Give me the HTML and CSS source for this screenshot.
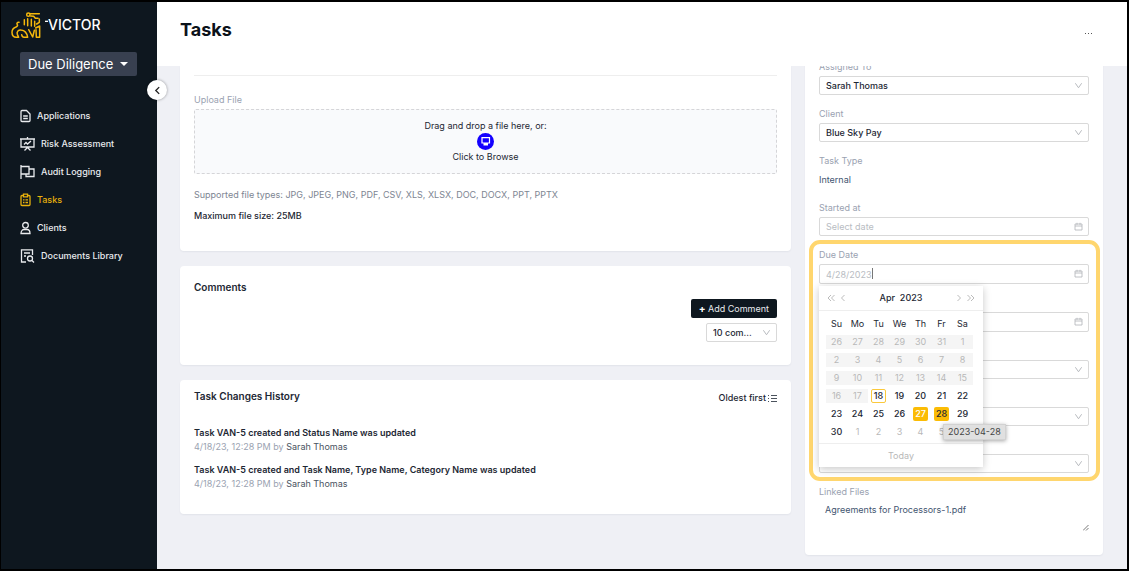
FILE: index.html
```
<!DOCTYPE html>
<html lang="en">
<head>
  <meta charset="UTF-8" />
  <meta name="viewport" content="width=device-width, initial-scale=1.0" />
  <title>Victor - Tasks</title>
  <link rel="stylesheet" href="styles.css">
</head>
<body>
<!-- shared icons -->
<svg class="sprite" aria-hidden="true">
  <symbol id="i-down" viewBox="0 0 8 8"><path d="M1.200 2 4 6l2.800-4" fill="none" stroke="currentColor" stroke-width=".8"/></symbol>
  <symbol id="i-cal" viewBox="0 0 9 9"><path d="M1 2h7v6H1zM1 4h7M3 .8v2M6 .8v2" fill="none" stroke="currentColor" stroke-width=".8"/></symbol>
</svg>

<div class="app">
  <!-- SIDEBAR -->
  <aside class="sidebar">
    <a class="brand" href="#">
      <svg class="lion" viewBox="33 28 111 84" aria-hidden="true">
        <g fill="none" stroke="#f5b80c" stroke-width="4.500" stroke-linejoin="round" stroke-linecap="round">
          <circle cx="85" cy="39" r="5"/>
          <path d="M91 36h27M92 43l9 1 5 6h8M73 54v15M83 51v21M94 53v20M104 59v15M118 52v10l-8 5"/>
          <path d="M57 62c-5-1-8 4-5 7 2 3 0 5-4 7-8 3-12 8-12 16 0 9 5 15 13 15h7M56 107l-4-9c-3-8 4-14 11-13 12 1 18 9 20 22H72c-4 0-6-3-7-8M86 84l12 22 5-20M108 84l1 23h10V73l-12 6"/>
        </g>
        <path d="M135 59h10" stroke="#fff" stroke-width="4"/>
      </svg>
      <span class="brand-name">VICTOR</span>
    </a>
    <button class="switcher">Due Diligence <span class="caret"></span></button>
    <button class="collapse" aria-label="Collapse menu">
      <svg viewBox="0 0 8 8"><path d="M5.500 1 2.500 4l3 3" fill="none" stroke="#222" stroke-width="1.200"/></svg>
    </button>
    <nav>
      <a href="#"><svg class="ico" viewBox="0 0 11 14"><path d="M2 1.500h4.500L10 5v6.500q0 1-1 1H2q-1 0-1-1v-9q0-1 1-1zM3.200 7h4.600M3.200 9.500h4.600"/></svg>Applications</a>
      <a href="#"><svg class="ico wide" viewBox="0 0 15 14"><path d="M0 2h15M1 2v8h13V2M7.500 0v2M4 7.500 6 5.500l1.500 1.500 3.500-3M4.500 13.500l3-3 3 3"/></svg>Risk Assessment</a>
      <a href="#"><svg class="ico wide" viewBox="0 0 15 14"><path d="M1 0v14M1 1.500h8v7.500H1M9 4h5v7.500H6V9"/></svg>Audit Logging</a>
      <a href="#" class="active"><svg class="ico" viewBox="0 0 11 14"><path d="M3.500 2.500H2q-1 0-1 1v8q0 1 1 1h7q1 0 1-1v-8q0-1-1-1H7.500M3.500 1.200h4v2.600h-4zM3 6.800h1.500M5.500 6.800H8M3 9.500h1.500M5.500 9.500H8"/></svg>Tasks</a>
      <a href="#"><svg class="ico" viewBox="0 0 11 14"><circle cx="5.500" cy="4.300" r="2.800"/><path d="M1 12.500c0-2.500 1.500-4 3-4h3c1.500 0 3 1.500 3 4z"/></svg>Clients</a>
      <a href="#"><svg class="ico wide" viewBox="0 0 15 14"><path d="M6 13H1.500V.8h11V6M4 4h6M4 7h2M12 11.500l2 2"/><circle cx="10" cy="9.500" r="2.500"/></svg>Documents Library</a>
    </nav>
  </aside>

  <div class="main">
    <header class="topbar">
      <h1>Tasks</h1>
      <button class="more" aria-label="More actions"><i></i><i></i><i></i></button>
    </header>

    <div class="content">
      <div class="col">
        <!-- UPLOAD -->
        <section class="card upload">
          <hr>
          <h3 class="label">Upload File</h3>
          <div class="dropzone">
            <p>Drag and drop a file here, or:</p>
            <button class="browse">
              <svg viewBox="0 0 17 17"><circle cx="8.500" cy="8.500" r="8.500" fill="#1400ff"/><path d="M5 4.700h7.500v5.300H5z" fill="none" stroke="#fff" stroke-width="1.200"/><path d="M6.500 10h4.500v2.500H6.500z" fill="#fff"/></svg>
              Click to Browse
            </button>
          </div>
          <p class="types">Supported file types: JPG, JPEG, PNG, PDF, CSV, XLS, XLSX, DOC, DOCX, PPT, PPTX</p>
          <p class="max">Maximum file size: 25MB</p>
        </section>

        <!-- COMMENTS -->
        <section class="card comments">
          <h2>Comments</h2>
          <div class="comment-tools">
            <button class="add"><b>+</b> Add Comment</button>
            <div class="control count">
              <select aria-label="Comments per page"><option>10 com...</option></select>
              <svg><use href="#i-down"/></svg>
            </div>
          </div>
        </section>

        <!-- HISTORY -->
        <section class="card history">
          <div class="history-head">
            <h2>Task Changes History</h2>
            <button class="sort">Oldest first
              <svg viewBox="0 0 9 9"><path d="M3 1.500h6M3 4.500h6M3 7.500h6M0 1.500h1M0 4.500h1M0 7.500h1" stroke="currentColor" stroke-width=".8" fill="none"/></svg>
            </button>
          </div>
          <ul>
            <li>
              <strong>Task VAN-5 created and Status Name was updated</strong>
              <p>4/18/23, 12:28 PM by <span>Sarah Thomas</span></p>
            </li>
            <li>
              <strong>Task VAN-5 created and Task Name, Type Name, Category Name was updated</strong>
              <p>4/18/23, 12:28 PM by <span>Sarah Thomas</span></p>
            </li>
          </ul>
        </section>
      </div>

      <!-- DETAILS -->
      <section class="card details">
        <div class="field">
          <label for="assigned">Assigned To</label>
          <div class="control"><select id="assigned"><option>Sarah Thomas</option></select><svg><use href="#i-down"/></svg></div>
        </div>
        <div class="field">
          <label for="client">Client</label>
          <div class="control"><select id="client"><option>Blue Sky Pay</option></select><svg><use href="#i-down"/></svg></div>
        </div>
        <div class="field">
          <span class="label">Task Type</span>
          <p class="value">Internal</p>
        </div>
        <div class="field">
          <label for="started">Started at</label>
          <div class="control"><input id="started" type="text" placeholder="Select date"><svg><use href="#i-cal"/></svg></div>
        </div>

        <div class="highlight">
          <div class="field">
            <label for="due">Due Date</label>
            <div class="control date"><input id="due" type="text" value="4/28/2023"><span class="cursor"></span><svg><use href="#i-cal"/></svg></div>
          </div>
          <div class="field under">
            <div class="control date"><input type="text" aria-label="Completed at"><svg><use href="#i-cal"/></svg></div>
          </div>
          <div class="field under">
            <div class="control"><select aria-label="Priority"></select><svg><use href="#i-down"/></svg></div>
          </div>
          <div class="field under">
            <div class="control"><select aria-label="Status"></select><svg><use href="#i-down"/></svg></div>
          </div>
          <div class="field under">
            <div class="control"><select aria-label="Category"></select><svg><use href="#i-down"/></svg></div>
          </div>

          <div class="picker">
            <div class="picker-head">
              <button aria-label="Previous year"><svg viewBox="0 0 8 8"><path d="M4 1 1 4l3 3M7.500 1l-3 3 3 3"/></svg></button>
              <button aria-label="Previous month"><svg viewBox="0 0 8 8"><path d="M5.500 1l-3 3 3 3"/></svg></button>
              <span class="month">Apr&nbsp; 2023</span>
              <button aria-label="Next month"><svg viewBox="0 0 8 8"><path d="M2.500 1l3 3-3 3"/></svg></button>
              <button aria-label="Next year"><svg viewBox="0 0 8 8"><path d="M.5 1l3 3-3 3M4 1l3 3-3 3"/></svg></button>
            </div>
            <table>
              <thead><tr><th>Su</th><th>Mo</th><th>Tu</th><th>We</th><th>Th</th><th>Fr</th><th>Sa</th></tr></thead>
              <tbody>
                <tr><td><button disabled>26</button></td><td><button disabled>27</button></td><td><button disabled>28</button></td><td><button disabled>29</button></td><td><button disabled>30</button></td><td><button disabled>31</button></td><td><button disabled>1</button></td></tr>
                <tr><td><button disabled>2</button></td><td><button disabled>3</button></td><td><button disabled>4</button></td><td><button disabled>5</button></td><td><button disabled>6</button></td><td><button disabled>7</button></td><td><button disabled>8</button></td></tr>
                <tr><td><button disabled>9</button></td><td><button disabled>10</button></td><td><button disabled>11</button></td><td><button disabled>12</button></td><td><button disabled>13</button></td><td><button disabled>14</button></td><td><button disabled>15</button></td></tr>
                <tr><td><button disabled>16</button></td><td><button disabled>17</button></td><td><button class="today">18</button></td><td><button>19</button></td><td><button>20</button></td><td><button>21</button></td><td><button>22</button></td></tr>
                <tr><td><button>23</button></td><td><button>24</button></td><td><button>25</button></td><td><button>26</button></td><td><button class="picked">27</button></td><td><button class="hovered">28</button></td><td><button>29</button></td></tr>
                <tr><td><button>30</button></td><td><button class="next">1</button></td><td><button class="next">2</button></td><td><button class="next">3</button></td><td><button class="next">4</button></td><td><button class="next">5</button></td><td><button class="next">6</button></td></tr>
              </tbody>
            </table>
            <button class="picker-foot">Today</button>
            <div class="tip">2023-04-28</div>
          </div>
        </div>

        <div class="linked">
          <span class="label">Linked Files</span>
          <a href="#">Agreements for Processors-1.pdf</a>
          <svg class="grip" viewBox="0 0 6 6"><path d="M0 5.500 5.500 0M3 5.500l2.500-2.500" stroke="#555" fill="none" stroke-width=".8"/></svg>
        </div>
      </section>
    </div>
  </div>
</div>
</body>
</html>
```
FILE: styles.css
```
:root { --navy:#0e171f; --ink:#1d2733; --muted:#9aa2b1; --line:#d9d9d9; --amber:#fbbc05; --bg:#eff0f5; }
*{box-sizing:border-box;margin:0;padding:0}
body{font:9px/14px Inter,"Liberation Sans",sans-serif;color:var(--ink);background:var(--bg)}
button{font:inherit;color:inherit;background:none;border:none;cursor:pointer}
a{color:inherit;text-decoration:none}
ul{list-style:none}
.sprite{position:absolute;width:0;height:0}

.app{display:grid;grid-template-columns:156px minmax(0,1fr);min-height:100vh;border:solid #000;border-width:2px 2px 2px 1px}

/* sidebar */
.sidebar{position:relative;z-index:2;background:var(--navy);color:#e9ebee;padding:8px 0 0}
.brand{display:flex;align-items:center;padding-left:10px;height:30px}
.lion{width:37px;height:28px}
.brand-name{font-size:14px;font-weight:500;line-height:16px;color:#fff}
.switcher{display:flex;align-items:center;gap:7px;margin:12px 0 0 19px;height:24px;padding:0 9px 0 8px;border-radius:2px;background:#384050;color:#fff;font-size:13px}
.caret{border:4px solid transparent;border-top-color:#fff;border-bottom:0}
.collapse{position:absolute;right:-10px;top:78px;width:20px;height:20px;border-radius:50%;background:#fff;box-shadow:0 0 3px rgba(0,0,0,.4);display:grid;place-items:center}
.collapse svg{width:9px;height:9px}
nav{margin-top:26px;padding-left:19px}
nav a{display:flex;align-items:center;gap:6px;height:28px;font-weight:500}
nav .active{color:#e8b10c}
.ico{width:11px;height:14px;fill:none;stroke:currentColor;stroke-width:1.3}
.wide{width:15px}

/* top bar */
.main{display:flex;flex-direction:column;min-width:0}
.topbar{display:flex;justify-content:space-between;align-items:center;height:64px;padding:0 35px 8px 23px;background:#fff;position:relative;z-index:1}
h1{font-size:18px;line-height:24px;font-weight:700;color:#0b121a}
.more{display:flex;gap:2px;padding:6px 0 0}
.more i{width:1px;height:1px;background:#555}

/* cards */
.content{flex:1;display:grid;grid-template-columns:minmax(0,1fr) 298px;align-items:start;gap:14px;padding:0 24px 14px 23px;overflow:hidden}
.col{display:grid;gap:15px}
.card{background:#fff;border-radius:4px;padding:14px;box-shadow:0 1px 2px rgba(20,30,60,.06)}
h2{font-size:10px;line-height:14px;font-weight:600}
.label,label{display:block;font-size:9px;font-weight:400;line-height:14px;color:var(--muted)}

.upload{border-radius:0 0 4px 4px;padding-top:9px;height:185px}
.upload hr{border:0;border-top:1px solid #eee;margin-bottom:17px}
.dropzone{margin-top:2px;padding:9px;border:1px dashed #d5d5d8;border-radius:2px;background:#f9fafc;text-align:center}
.browse{display:block;margin:auto}
.browse svg{display:block;width:17px;height:17px;margin:auto}
.types{margin-top:14px;color:#7d8592}
.max{margin-top:7px;font-weight:500}

.comment-tools{display:flex;flex-direction:column;align-items:flex-end;gap:3px;margin-top:5px}
.comments{padding-bottom:23px}
.add{height:19px;padding:0 8px;border-radius:2px;background:var(--navy);color:#e9ebee}
.add b{font-size:10px;color:#fff}
.count{width:71px}

.history{padding:9px 14px 23px}
.history-head{display:flex;justify-content:space-between}
.sort{display:flex;align-items:center;gap:2px;font-weight:500;padding-top:2px}
.sort svg{width:9px;height:9px}
.history ul{display:grid;gap:9px;margin-top:21px}
.history strong{display:block;font-weight:600}
.history li p{color:var(--muted);line-height:14px}
.history li span{color:#4a5361}

/* details form */
.details{margin-top:-20px;padding-bottom:24px}
.field{margin-bottom:12px}
.control{position:relative;height:19px;margin-top:2px}
.control select,.control input{appearance:none;display:block;width:100%;height:100%;padding:0 20px 0 6px;border:1px solid var(--line);border-radius:2px;background:#fff;font:inherit;color:var(--ink);outline:0}
.control select{font-weight:500}
.control input,.control input::placeholder{color:#b8bcc2}
.control svg{position:absolute;right:6px;top:5px;width:9px;height:9px;color:#b0b3b8}
.date{height:20px}
.under{padding-top:14px}
.value,.linked a{color:#3f5570}
.value{margin-top:5px;padding-bottom:2px}
.cursor{position:absolute;left:53px;top:4px;width:1px;height:11px;background:#777}

.highlight{position:relative}
.highlight::before{content:"";position:absolute;inset:-8px -11px -8px -10px;border:4px solid #ffd66e;border-radius:11px;pointer-events:none}

.linked{display:flex;flex-direction:column}
.linked a{margin:4px 0 0 6px}
.grip{width:6px;height:6px;margin:8px 0 0;align-self:flex-end}

/* date picker */
.picker{position:absolute;left:0;top:38px;width:164px;background:#fff;box-shadow:0 2px 8px rgba(0,0,0,.22)}
.picker-head{display:flex;align-items:center;height:25px;padding:0 6px;border-bottom:1px solid #eee}
.picker-head svg{display:block;width:8px;height:8px;margin:2px;fill:none;stroke:#aaa;stroke-width:.8}
.month{flex:1;text-align:center;font-weight:500}
.picker table{width:147px;margin:4px 0 2px 7px;border-collapse:collapse;table-layout:fixed}
.picker th,.picker td{height:18px;text-align:center;font-weight:400}
.picker td button{display:block;width:15px;height:14px;margin:auto;border-radius:2px;line-height:14px;font-weight:500}
.picker td button:disabled{width:100%;border-radius:0;background:#f5f5f5;color:#b8b8b8;font-weight:400}
.picker td .next{color:#b8b8b8;font-weight:400}
.picker td .today{border:1px solid #fbc93c;line-height:12px}
.picker td .picked{background:var(--amber);color:#fff}
.picker td .hovered{background:var(--amber)}
.picker-foot{display:block;width:100%;height:24px;border-top:1px solid #eee;color:#b8b8b8}
.tip{position:absolute;left:124px;top:138px;padding:0 4px;border:1px solid #d2d2d2;background:#e0e0e0;box-shadow:0 1px 4px rgba(0,0,0,.35);color:#444;white-space:nowrap}
```
